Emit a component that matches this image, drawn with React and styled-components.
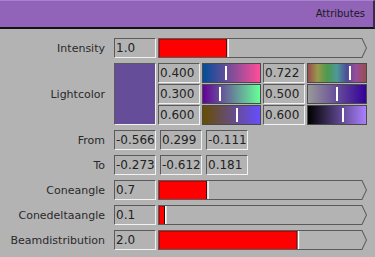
import React from "react";
import styled, { createGlobalStyle } from "styled-components";

const GlobalStyle = createGlobalStyle`
  * { margin: 0; padding: 0; box-sizing: border-box; }
  body {
    background: #b3b3b3;
    font-family: "DejaVu Sans", "Liberation Sans", sans-serif;
    color: #262626;
  }
`;

const Panel = styled.div`
  width: 375px;
  height: 257px;
  background: #b3b3b3;
  overflow: hidden;
`;

const Header = styled.div`
  height: 29px;
  background: #9164b9;
  border-top: 1px solid #a683cc;
  border-bottom: 2px solid #141414;
  border-right: 2px solid #3a2a50;
  display: flex;
  align-items: center;
  justify-content: flex-end;
  padding: 0 8px 1px 0;
  font-size: 10px;
  color: #1a1a1a;
`;

const Rows = styled.div`
  display: grid;
  grid-template-columns: 105px 1fr;
  column-gap: 9px;
  row-gap: 5px;
  padding: 9px 8px 0 0;
`;

const Label = styled.div`
  font-size: 11px;
  text-align: right;
  align-self: center;
  color: #2a2a2a;
`;

const Line = styled.div`
  display: flex;
  align-items: center;
  gap: ${({ $gap }) => $gap || 2}px;
  height: 20px;
`;

const NumBox = styled.div`
  width: 42px;
  height: 20px;
  flex: none;
  border-top: 1px solid #5a5a5a;
  border-left: 1px solid #5a5a5a;
  border-bottom: 1px solid #f2f2f2;
  border-right: 1px solid #f2f2f2;
  background: #b3b3b3;
  font-size: 12px;
  line-height: 18px;
  padding-left: 1px;
  white-space: nowrap;
  overflow: hidden;
  color: #222;
`;

const ColorBlock = styled.div`
  display: grid;
  grid-template-columns: 42px 1fr;
  column-gap: 2px;
`;

const Swatch = styled.div`
  height: 62px;
  background: ${({ $color }) => $color};
  border-top: 1px solid #5a5a5a;
  border-left: 1px solid #5a5a5a;
  border-bottom: 1px solid #f2f2f2;
  border-right: 1px solid #f2f2f2;
`;

const Channels = styled.div`
  display: flex;
  flex-direction: column;
  gap: 1px;
`;

const ChannelRow = styled.div`
  display: grid;
  grid-template-columns: 42px 59px 42px 60px;
  column-gap: 2px;
  height: 20px;
`;

const Gradient = styled.div`
  position: relative;
  height: 20px;
  border: 1px solid #4a4a4a;
  background: ${({ $grad }) => $grad};
`;

const Marker = styled.div`
  position: absolute;
  top: 2px;
  bottom: 2px;
  width: 2px;
  background: #fff;
  transform: translateX(-1px);
`;

const SliderWrap = styled.div`
  flex: 1;
  height: 20px;
  display: flex;
`;

function Slider({ value, max = 3 }) {
  const w = 208;
  const fill = Math.round((value / max) * w);
  return (
    <SliderWrap>
      <svg width="100%" height="20" viewBox={`0 0 ${w} 20`} preserveAspectRatio="none">
        <path
          d={`M0.5,0.5 H${w - 5} L${w - 0.5},10 L${w - 5},19.5 H0.5 Z`}
          fill="#b3b3b3"
          stroke="#5a5a5a"
        />
        <rect x="1" y="1" width={fill - 1} height="18" fill="#ff0000" />
        <rect x="1" y="1" width={fill - 1} height="1" fill="#c40000" />
        <rect x="1" y="1" width="1" height="18" fill="#c40000" />
        <rect x={fill - 1} y="1" width="1" height="18" fill="#111" />
        <rect x={fill} y="1" width="1.5" height="18" fill="#fff" />
      </svg>
    </SliderWrap>
  );
}

const rgb = (r, g, b) => `rgb(${Math.round(r * 255)},${Math.round(g * 255)},${Math.round(b * 255)})`;

function hsv(h, s, v) {
  const i = Math.floor(h * 6) % 6;
  const f = h * 6 - Math.floor(h * 6);
  const p = v * (1 - s);
  const q = v * (1 - f * s);
  const t = v * (1 - (1 - f) * s);
  const m = [
    [v, t, p], [q, v, p], [p, v, t], [p, q, v], [t, p, v], [v, p, q],
  ][i];
  return rgb(m[0], m[1], m[2]);
}

const R = 0.4, G = 0.3, B = 0.6;
const H = 0.722, S = 0.5, V = 0.6;

const hueStops = Array.from({ length: 13 }, (_, k) => hsv((k / 12) % 1, S, V)).join(", ");

const channels = [
  {
    a: "0.400", av: R, ag: `linear-gradient(to right, ${rgb(0, G, B)}, ${rgb(1, G, B)})`,
    b: "0.722", bv: H, bg: `linear-gradient(to right, ${hueStops})`,
  },
  {
    a: "0.300", av: G, ag: `linear-gradient(to right, ${rgb(R, 0, B)}, ${rgb(R, 1, B)})`,
    b: "0.500", bv: S, bg: `linear-gradient(to right, ${hsv(H, 0, V)}, ${hsv(H, 1, V)})`,
  },
  {
    a: "0.600", av: B, ag: `linear-gradient(to right, ${rgb(R, G, 0)}, ${rgb(R, G, 1)})`,
    b: "0.600", bv: V, bg: `linear-gradient(to right, ${hsv(H, S, 0)}, ${hsv(H, S, 1)})`,
  },
];

export default function App() {
  return (
    <Panel>
      <GlobalStyle />
      <Header>Attributes</Header>
      <Rows>
        <Label>Intensity</Label>
        <Line>
          <NumBox>1.0</NumBox>
          <Slider value={1.0} />
        </Line>

        <Label>Lightcolor</Label>
        <ColorBlock>
          <Swatch $color={rgb(R, G, B)} />
          <Channels>
            {channels.map((c) => (
              <ChannelRow key={c.a + c.b}>
                <NumBox>{c.a}</NumBox>
                <Gradient $grad={c.ag}>
                  <Marker style={{ left: `${c.av * 100}%` }} />
                </Gradient>
                <NumBox>{c.b}</NumBox>
                <Gradient $grad={c.bg}>
                  <Marker style={{ left: `${c.bv * 100}%` }} />
                </Gradient>
              </ChannelRow>
            ))}
          </Channels>
        </ColorBlock>

        <Label>From</Label>
        <Line $gap={4}>
          <NumBox>-0.566</NumBox>
          <NumBox>0.299</NumBox>
          <NumBox>-0.111</NumBox>
        </Line>

        <Label>To</Label>
        <Line $gap={4}>
          <NumBox>-0.273</NumBox>
          <NumBox>-0.612</NumBox>
          <NumBox>0.181</NumBox>
        </Line>

        <Label>Coneangle</Label>
        <Line>
          <NumBox>0.7</NumBox>
          <Slider value={0.7} />
        </Line>

        <Label>Conedeltaangle</Label>
        <Line>
          <NumBox>0.1</NumBox>
          <Slider value={0.1} />
        </Line>

        <Label>Beamdistribution</Label>
        <Line>
          <NumBox>2.0</NumBox>
          <Slider value={2.0} />
        </Line>
      </Rows>
    </Panel>
  );
}
